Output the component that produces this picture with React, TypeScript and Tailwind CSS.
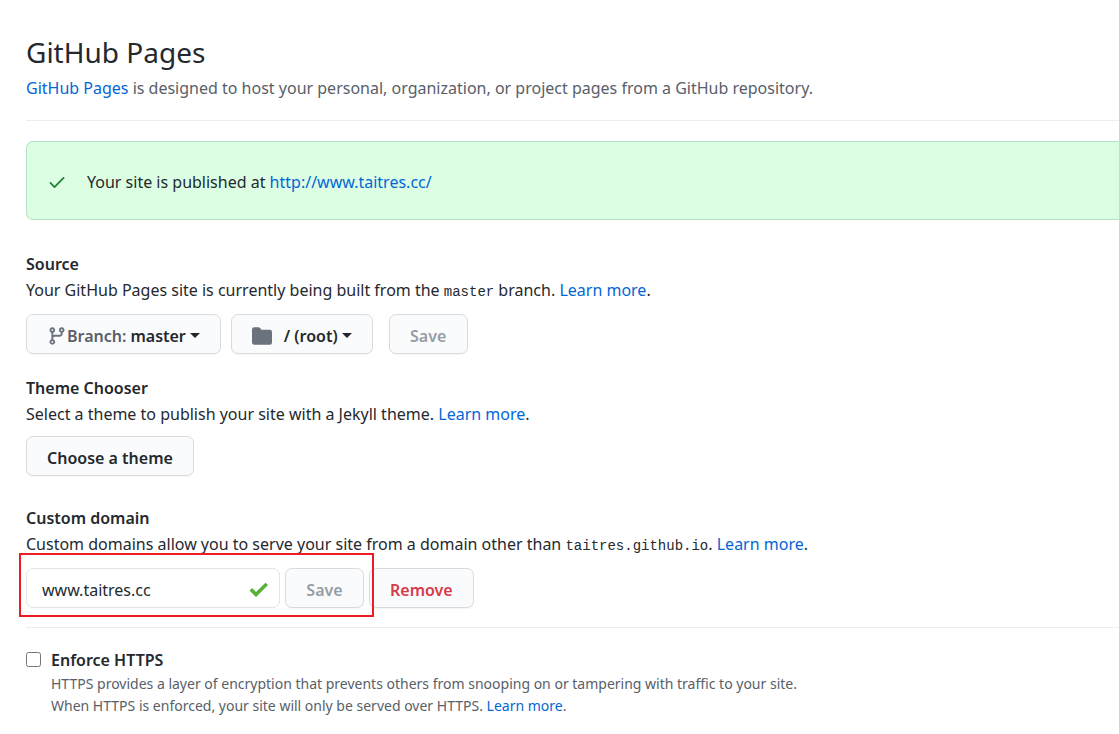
import { useState } from 'react';
import type { ButtonHTMLAttributes, ReactNode } from 'react';

function Link({ href, children }: { href: string; children: ReactNode }) {
  return (
    <a href={href} className="text-[#0366d6] hover:underline">
      {children}
    </a>
  );
}

function Code({ children }: { children: ReactNode }) {
  return <code className="font-['Liberation_Mono',monospace] text-[14px] leading-none">{children}</code>;
}

type ButtonProps = ButtonHTMLAttributes<HTMLButtonElement> & { tone?: 'default' | 'danger' };

const tones = {
  default: 'text-[#24292e] disabled:text-[#959da5]',
  danger: 'text-[#d73a49]',
};

function Button({ tone = 'default', children, ...rest }: ButtonProps) {
  return (
    <button
      type="button"
      className={`flex h-10 min-w-[79px] shrink-0 items-center justify-center rounded-[7px] border border-[#d9dbdd] bg-[#fafbfc] px-5 pt-[3px] text-[16px] font-semibold whitespace-nowrap shadow-[0_1px_0_rgba(27,31,35,0.04)] ${tones[tone]}`}
      {...rest}
    >
      {children}
    </button>
  );
}

function Caret() {
  return (
    <svg width="10" height="5" viewBox="0 0 10 5" className="ml-1 fill-current" aria-hidden="true">
      <path d="M0 0h10L5 5z" />
    </svg>
  );
}

function BranchIcon() {
  return (
    <svg width="20" height="20" viewBox="0 0 16 16" className="fill-[#6a737d]" aria-hidden="true">
      <path
        fillRule="evenodd"
        d="M11.75 2.5a.75.75 0 100 1.5.75.75 0 000-1.5zm-2.25.75a2.25 2.25 0 113 2.122V6A2.5 2.5 0 0110 8.500H6a1 1 0 00-1 1v1.128a2.251 2.251 0 11-1.500 0V5.372a2.250 2.250 0 111.500 0v1.836A2.492 2.492 0 016 7h4a1 1 0 001-1v-.628A2.250 2.250 0 019.500 3.250zM4.250 12a.75.75 0 100 1.500.75.75 0 000-1.500zM3.500 3.250a.75.75 0 111.500 0 .75.75 0 01-1.500 0z"
      />
    </svg>
  );
}

function FolderIcon() {
  return (
    <svg width="20" height="20" viewBox="0 0 16 16" className="mr-3 fill-[#6a737d]" aria-hidden="true">
      <path d="M1.750 1A1.750 1.750 0 000 2.750v10.500C0 14.216.784 15 1.750 15h12.500A1.750 1.750 0 0016 13.250v-8.500A1.750 1.750 0 0014.250 3h-6.500a.25.25 0 01-.2-.1l-.9-1.200C6.070 1.260 5.550 1 5 1H1.750z" />
    </svg>
  );
}

function CheckIcon() {
  return (
    <svg width="20" height="20" viewBox="0 0 16 16" className="fill-[#22863a]" aria-hidden="true">
      <path d="M13.780 4.220a.75.75 0 010 1.060l-7.250 7.250a.75.75 0 01-1.060 0L2.220 9.280a.75.75 0 011.060-1.060L6 10.940l6.720-6.720a.75.75 0 011.060 0z" />
    </svg>
  );
}

export default function App() {
  const [domain, setDomain] = useState('www.taitres.cc');

  return (
    <main className="min-h-screen bg-white pt-[30px] pb-4 pl-[26px] font-['Noto_Sans',sans-serif] text-[16px] leading-[26px] text-[#24292e]">
      <header className="border-b border-[#eaecef] pb-[19px]">
        <h1 className="text-[28px] leading-[45px]">GitHub Pages</h1>
        <p className="text-[#586069]">
          <Link href="#pages">GitHub Pages</Link> is designed to host your personal, organization, or project pages
          from a GitHub repository.
        </p>
      </header>

      <div className="mt-5 flex min-h-[79px] items-center rounded-l-[7px] border border-r-0 border-[#b4e3be] bg-[#dcffe4] px-5 pt-0.5">
        <CheckIcon />
        <p className="ml-5">
          Your site is published at <Link href="#site">http://www.taitres.cc/</Link>
        </p>
      </div>

      <section className="mt-[31px]">
        <h2 className="font-semibold">Source</h2>
        <p>
          Your GitHub Pages site is currently being built from the <Code>master</Code> branch.{' '}
          <Link href="#source">Learn more</Link>.
        </p>
        <div className="mt-[11px] flex">
          <Button aria-haspopup="menu">
            <BranchIcon />
            <span className="mr-1 text-[#586069]">Branch:</span>
            master
            <Caret />
          </Button>
          <div className="ml-2.5">
            <Button aria-haspopup="menu">
              <FolderIcon />
              / (root)
              <Caret />
            </Button>
          </div>
          <div className="ml-4">
            <Button disabled>Save</Button>
          </div>
        </div>
      </section>

      <section className="mt-[21px]">
        <h2 className="font-semibold">Theme Chooser</h2>
        <p>
          Select a theme to publish your site with a Jekyll theme. <Link href="#themes">Learn more</Link>.
        </p>
        <div className="mt-[9px] flex">
          <Button>Choose a theme</Button>
        </div>
      </section>

      <section className="mt-[29px] border-b border-[#eaecef] pb-[19px]">
        <h2 className="font-semibold">
          <label htmlFor="domain">Custom domain</label>
        </h2>
        <p>
          Custom domains allow you to serve your site from a domain other than <Code>taitres.github.io</Code>.{' '}
          <Link href="#domains">Learn more</Link>.
        </p>
        <form className="mt-[11px] flex gap-[5px]">
          <div className="relative flex gap-[5px]">
            <div className="flex h-10 w-[254px] items-center rounded-[7px] border border-[#e1e4e8] pt-[3px] pr-2.5 pl-[15px]">
              <input
                id="domain"
                type="text"
                value={domain}
                onChange={(event) => setDomain(event.target.value)}
                className="min-w-0 flex-1 outline-none"
              />
              <svg width="20" height="16" viewBox="0 0 20 16" className="fill-[#55b035]" aria-hidden="true">
                <path d="M0.500 8.500l2.500-2.500 4 4L16.500 0.800l2.500 2.200L7 15z" />
              </svg>
            </div>
            <Button disabled>Save</Button>
            <div className="pointer-events-none absolute -top-[15px] -right-[10px] -bottom-[9px] -left-[7px] z-10 border-2 border-[#ed1c24]" />
          </div>
          <Button tone="danger">Remove</Button>
        </form>
      </section>

      <section className="mt-[19px] flex">
        <input id="https" type="checkbox" className="mt-[5px] size-[15px] shrink-0" />
        <div className="ml-2.5">
          <label htmlFor="https" className="font-semibold">
            Enforce HTTPS
          </label>
          <p className="text-[14px] leading-[22px] text-[#586069]">
            HTTPS provides a layer of encryption that prevents others from snooping on or tampering with traffic to
            your site.
            <br />
            When HTTPS is enforced, your site will only be served over HTTPS. <Link href="#https-help">Learn more</Link>.
          </p>
        </div>
      </section>
    </main>
  );
}
